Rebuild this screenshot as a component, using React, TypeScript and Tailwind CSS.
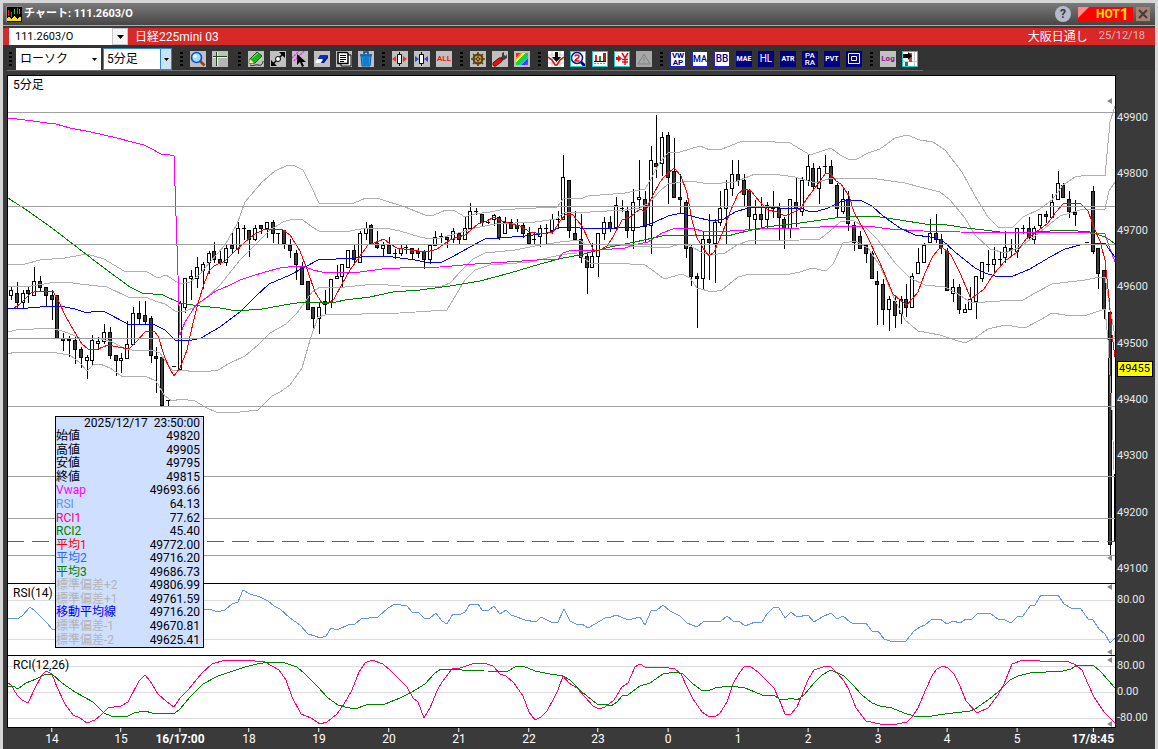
import type { ReactNode } from "react";

// [high, body top, body bottom, low, filled]
type Candle = [number, number, number, number, number] | null;

const candles: Candle[] = [
  [197, 200, 205, 209, 0], [192, 203, 212, 217, 1], [200, 203, 212, 217, 0], [197, 200, 203, 212, 1],
  [177, 191, 205, 205, 0], [186, 191, 197, 200, 1], [197, 197, 205, 215, 1], [200, 205, 209, 229, 1],
  [205, 205, 248, 248, 1], [243, 248, 250, 260, 1], [246, 249, 250, 266, 1], [246, 250, 259, 273, 1],
  [257, 259, 267, 277, 1], [265, 267, 270, 288, 0], [245, 250, 270, 275, 0], [247, 251, 253, 259, 0],
  [234, 242, 251, 253, 0], [237, 242, 265, 268, 1], [265, 265, 270, 285, 1], [263, 268, 270, 282, 0],
  [231, 254, 268, 268, 0], [217, 223, 254, 254, 0], [211, 223, 228, 234, 1], [211, 225, 231, 234, 1],
  [226, 228, 265, 272, 1], [257, 266, 268, 302, 1], [267, 267, 315, 315, 1], [310, 310, 310, 316, 1],
  [276, 276, 276, 276, 1], [211, 213, 279, 279, 0], [188, 188, 217, 222, 0], [180, 186, 188, 209, 0],
  [167, 177, 188, 197, 0], [172, 174, 180, 198, 0], [161, 163, 172, 183, 0], [152, 161, 169, 172, 1],
  [161, 169, 172, 174, 1], [155, 158, 172, 175, 0], [141, 155, 158, 163, 1], [132, 138, 158, 163, 0],
  [135, 138, 138, 149, 0], [140, 140, 149, 166, 1], [135, 138, 149, 150, 0], [135, 135, 138, 143, 1],
  [132, 132, 138, 147, 0], [130, 132, 143, 152, 1], [143, 143, 143, 154, 1], [140, 140, 153, 158, 1],
  [149, 155, 160, 167, 1], [160, 163, 174, 189, 1], [172, 177, 194, 194, 1], [191, 191, 219, 219, 1],
  [217, 217, 228, 237, 1], [213, 217, 228, 243, 0], [200, 211, 214, 223, 1], [189, 189, 211, 217, 0],
  [175, 186, 188, 188, 0], [174, 174, 186, 197, 0], [160, 160, 177, 177, 0], [155, 160, 169, 174, 1],
  [141, 143, 172, 172, 0], [132, 138, 143, 149, 0], [134, 135, 153, 153, 1], [141, 153, 157, 158, 1],
  [152, 155, 158, 166, 0], [147, 155, 163, 163, 1], [159, 163, 163, 168, 1], [155, 158, 163, 165, 0],
  [155, 157, 157, 163, 1], [158, 158, 163, 168, 1], [158, 161, 163, 167, 1], [160, 161, 169, 178, 1],
  [155, 155, 169, 173, 0], [141, 147, 155, 155, 0], [143, 146, 146, 152, 1], [146, 147, 149, 157, 1],
  [138, 141, 149, 152, 0], [143, 143, 149, 153, 1], [127, 138, 149, 149, 0], [113, 121, 138, 138, 0],
  [118, 121, 121, 124, 1], [124, 124, 132, 135, 1], [129, 132, 132, 133, 1], [124, 125, 129, 135, 0],
  [126, 127, 147, 149, 1], [127, 132, 143, 143, 0], [129, 132, 138, 138, 1], [129, 135, 138, 141, 1],
  [132, 135, 143, 147, 1], [137, 143, 153, 153, 1], [143, 149, 149, 154, 1], [135, 138, 146, 156, 0],
  [134, 138, 138, 153, 1], [124, 129, 140, 143, 0], [121, 129, 129, 138, 1], [65, 87, 129, 129, 0],
  [90, 90, 140, 147, 1], [121, 143, 149, 150, 1], [124, 149, 167, 172, 1], [163, 166, 177, 203, 1],
  [153, 166, 177, 177, 0], [143, 143, 166, 186, 0], [127, 132, 143, 149, 0], [126, 132, 138, 141, 1],
  [107, 115, 138, 138, 0], [110, 118, 118, 121, 1], [117, 121, 140, 147, 1], [99, 112, 140, 158, 0],
  [70, 107, 109, 118, 0], [101, 109, 136, 151, 1], [56, 70, 135, 163, 0], [25, 73, 76, 87, 1],
  [42, 47, 73, 85, 0], [42, 45, 87, 113, 1], [48, 81, 107, 107, 1], [84, 107, 109, 123, 1],
  [110, 112, 158, 167, 1], [155, 157, 186, 195, 1], [183, 186, 188, 237, 1], [142, 149, 188, 198, 0],
  [124, 149, 152, 189, 1], [129, 132, 153, 192, 0], [101, 118, 132, 135, 0], [90, 99, 118, 154, 0],
  [70, 84, 98, 105, 0], [70, 84, 90, 95, 1], [84, 90, 104, 116, 1], [99, 101, 126, 138, 1],
  [110, 124, 129, 154, 0], [107, 124, 129, 136, 1], [112, 115, 129, 138, 0], [101, 118, 118, 127, 1],
  [113, 118, 127, 150, 1], [127, 129, 138, 158, 1], [109, 109, 138, 147, 0], [87, 112, 118, 136, 1],
  [87, 90, 121, 125, 0], [64, 76, 90, 95, 0], [73, 78, 96, 99, 1], [76, 78, 98, 113, 0],
  [65, 76, 76, 83, 1], [70, 76, 93, 93, 1], [93, 95, 118, 127, 1], [98, 109, 121, 123, 0],
  [101, 109, 133, 140, 1], [132, 135, 152, 160, 1], [141, 146, 158, 158, 1], [154, 155, 163, 172, 1],
  [161, 163, 188, 188, 1], [181, 191, 194, 234, 1], [189, 194, 219, 234, 1], [206, 209, 219, 240, 0],
  [206, 211, 225, 237, 1], [206, 209, 223, 233, 0], [194, 209, 217, 226, 1], [183, 186, 217, 217, 0],
  [158, 172, 183, 183, 0], [153, 155, 172, 172, 0], [129, 143, 152, 152, 0], [124, 143, 149, 152, 1],
  [144, 149, 157, 163, 1], [158, 161, 200, 200, 1], [189, 197, 203, 211, 0], [194, 197, 219, 223, 1],
  [214, 219, 222, 222, 0], [197, 209, 219, 219, 0], [186, 186, 211, 228, 0], [172, 172, 188, 191, 0],
  [160, 174, 174, 181, 1], [157, 169, 174, 183, 0], [161, 169, 169, 175, 1], [141, 157, 167, 172, 0],
  [149, 158, 160, 166, 1], [138, 138, 161, 167, 0], [135, 138, 138, 143, 1], [127, 138, 147, 150, 1],
  [136, 138, 149, 153, 0], [124, 124, 135, 137, 0], [121, 124, 126, 132, 1], [104, 112, 127, 127, 0],
  [81, 93, 109, 109, 0], [93, 95, 107, 107, 1], [101, 109, 121, 127, 1], [110, 122, 124, 135, 1],
  null, [152, 152, 152, 152, 1], [96, 101, 161, 163, 1], [158, 158, 183, 198, 1],
  [180, 180, 219, 228, 1], [222, 222, 454, 465, 1], [384, 384, 451, 451, 0],
];

const candleX = (i: number) => Math.floor(180.1 + (i - 29) * 5.815) + 0.5;

const bands = [
  "8,174 25,174 40,170 65,168 87,164 104,169 124,181 147,182 158,188 166,185 180,194 190,192 200,184 210,172 225,155 237,134 245,112 262,92 275,81 286,76 293,75 303,80 312,98 319,113 354,113 366,108 380,109 405,117 425,125 434,125 446,120 455,121 465,127 475,124 490,122 500,120 515,119 557,117 564,108 580,109 588,106 625,103 645,99 652,87 660,72 668,63 680,62 700,56 710,60 722,59 740,52 760,51 790,53 800,59 810,65 822,61 831,58 840,65 848,69 857,69 868,63 880,59 895,48 907,45 920,50 933,52 945,60 962,82 975,106 988,127 998,137 1013,137 1023,127 1040,119 1052,110 1063,95 1075,87 1088,85 1105,86 1110,32 1115,16",
  "8,196 25,197 50,193 65,192 80,194 107,197 128,207 145,207 158,212 165,214 175,221 183,222 193,218 205,209 220,195 240,170 258,152 270,140 283,132 293,129 303,130 312,137 319,141 350,141 366,138 385,138 400,141 420,147 430,149 440,148 455,144 475,138 495,134 535,132 556,129 564,123 590,122 625,120 640,118 650,112 660,101 668,94 690,91 710,94 735,92 755,84 780,85 795,87 815,93 832,88 860,89 870,88 905,93 920,97 940,102 950,110 965,128 975,145 990,159 1005,163 1020,157 1035,146 1050,134 1060,126 1080,120 1105,119 1109,101 1115,92",
  "8,242 16,240 52,238 68,243 82,249 98,248 112,252 124,258 132,260 152,260 160,263 166,272 172,280 205,282 218,280 230,273 245,266 258,255 270,243 286,234 297,223 305,212 312,202 320,197 345,197 375,194 400,196 440,197 450,193 462,180 473,169 485,163 515,160 535,156 560,152 580,150 585,154 630,156 650,157 670,157 680,154 690,156 703,163 712,165 725,163 737,155 748,151 800,150 820,149 830,141 840,132 852,130 865,137 878,150 895,173 910,188 925,195 945,197 958,204 970,212 985,212 1000,211 1023,210 1035,203 1052,194 1085,190 1100,187 1105,187 1109,212 1113,235 1115,247",
  "8,264 15,262 50,262 70,265 80,273 87,281 93,275 100,274 110,278 123,287 145,286 156,291 165,306 172,311 181,309 195,311 205,317 218,323 240,322 258,320 272,306 280,302 290,295 302,278 310,250 318,227 325,225 400,223 447,220 456,205 465,190 475,180 490,175 530,172 560,165 575,163 585,169 590,173 630,174 645,175 655,182 664,189 682,184 690,188 697,198 712,202 722,200 738,187 750,184 790,184 800,182 812,178 826,181 833,174 843,153 855,151 868,158 880,176 895,210 905,230 918,241 940,245 955,250 965,253 975,248 988,239 1005,235 1025,238 1040,230 1052,223 1065,225 1087,225 1105,219 1108,250 1112,320 1114,380",
];

const vwap =
  "8,28 25,30 40,32 47,33 56,34 70,38 91,42 117,48 132,52 144,55 150,58 161,64 170,65 174,66 180,245 185,232 196,215 206,208 216,201 228,196 240,190 252,186 265,182 280,178 296,176 306,177 313,180 322,182 332,183 360,182 382,179 400,178 440,177 475,174 507,172 537,170 558,169 563,163 569,161 580,160 600,160 625,158 633,155 648,152 662,143 676,138 695,139 702,141 730,141 760,139 800,138 840,136 867,136 890,139 923,141 960,142 1000,143 1030,142 1060,142 1090,143 1105,144 1109,156 1115,172";
const average3 =
  "8,108 28,121 52,138 78,158 104,178 130,197 142,203 163,205 180,213 200,216 220,218 237,221 262,219 290,214 305,212 336,212 345,210 370,207 393,202 420,200 450,196 480,191 510,183 540,174 563,168 580,165 610,157 635,152 662,146 685,145 728,146 735,144 765,137 800,133 835,128 860,126 880,127 900,130 925,134 940,134 967,138 1000,142 1020,143 1065,140 1090,142 1105,147 1110,150 1115,154";
const average2 =
  "8,219 28,218 52,216 65,217 75,219 87,223 95,221 105,222 128,234 155,235 165,240 175,250 188,251 201,248 220,237 240,222 256,206 269,194 290,185 305,177 318,170 355,168 368,166 385,166 400,168 415,170 430,173 442,172 452,167 470,157 485,149 500,148 525,146 548,143 558,138 570,137 590,139 640,137 655,132 668,126 681,123 695,127 712,131 724,129 735,122 748,118 760,117 780,118 800,118 808,121 818,121 828,118 840,112 848,110 862,111 872,116 883,126 900,138 915,145 930,147 942,150 955,162 975,178 985,183 995,186 1013,186 1030,179 1050,167 1065,159 1080,155 1105,153 1108,158 1115,167";
const average1 =
  "14,218 20,214 31,203 37,201 53,201 58,210 66,227 74,241 82,254 88,259 98,259 108,255 118,257 129,259 136,252 146,241 154,241 158,246 165,268 170,279 174,286 180,278 187,260 193,233 198,213 204,194 209,181 214,176 225,171 233,163 245,152 255,144 263,140 272,139 283,140 290,145 300,161 308,182 315,202 322,213 328,214 334,209 342,194 350,180 360,166 368,155 374,153 384,149 390,154 397,158 410,160 427,162 437,159 450,150 458,147 465,145 478,134 487,131 494,127 502,131 512,134 520,136 530,142 542,144 553,142 560,131 566,124 573,125 582,136 589,151 594,161 600,160 607,156 613,147 622,130 630,127 640,119 645,122 652,107 660,92 664,87 674,78 681,86 687,103 692,130 697,148 703,158 709,166 714,162 722,144 730,122 738,104 744,99 751,101 760,112 768,120 777,122 785,126 792,123 800,119 808,107 818,94 825,84 830,83 836,91 841,94 849,106 854,122 865,142 880,173 893,204 900,210 907,215 918,202 925,183 933,166 938,160 942,157 951,165 960,183 971,209 984,199 993,185 1005,171 1016,163 1026,149 1035,143 1048,133 1056,122 1064,113 1080,113 1088,121 1095,140 1100,151 1105,170 1109,208 1112,245 1115,267";
const rsi =
  "8,618 17,619 22,616 30,607 35,611 42,618 47,623 52,629 80,634 120,622 160,628 203,609 210,609 217,612 225,610 232,604 238,602 243,590 250,594 260,597 268,601 274,606 280,609 290,618 300,625 308,634 315,636 320,638 326,636 331,628 337,630 348,625 355,624 361,619 378,617 388,608 395,604 407,606 412,612 418,612 424,618 430,618 436,613 442,621 447,624 453,614 459,615 465,612 470,604 478,604 482,610 489,610 494,606 500,614 506,610 511,615 525,620 536,622 541,617 551,622 558,622 564,609 570,621 576,624 582,624 588,628 595,624 605,618 611,617 616,615 628,620 640,617 645,625 651,611 657,610 663,605 670,611 680,616 687,623 697,627 703,622 710,621 721,621 727,616 733,621 739,621 745,626 755,622 762,622 767,614 774,607 779,608 785,618 791,612 797,617 808,615 814,622 822,617 831,613 837,619 843,616 850,622 854,624 866,623 872,631 878,631 884,639 890,641 906,641 914,631 920,627 925,625 931,620 940,619 947,624 953,621 960,623 966,619 972,619 978,613 990,613 998,619 1005,620 1011,623 1018,616 1023,616 1030,606 1035,605 1041,595 1058,595 1064,604 1071,608 1081,609 1088,619 1093,620 1099,629 1105,634 1110,643 1115,638";
const rci1 =
  "8,683 11,685 17,695 22,700 28,703 35,688 42,675 46,671 52,674 57,687 65,704 73,715 80,718 87,723 95,720 101,715 108,708 121,706 128,702 139,681 145,675 150,681 158,694 167,702 174,707 180,698 188,690 202,673 212,664 225,660 245,660 265,662 272,666 279,670 286,680 292,697 301,714 311,718 320,724 327,722 337,714 344,704 352,690 359,672 365,663 372,660 383,664 391,671 399,679 407,687 413,698 418,702 424,718 430,708 437,691 442,682 452,669 460,668 475,663 487,664 493,666 500,674 506,676 514,683 523,696 529,712 535,720 541,717 547,711 553,700 558,690 563,676 569,683 577,688 585,697 593,706 599,709 605,707 614,700 622,687 628,683 635,667 640,664 645,667 662,667 675,669 681,674 687,687 693,699 702,712 708,716 715,717 720,713 727,702 733,684 738,675 744,667 750,666 758,672 766,680 774,688 779,699 785,714 791,714 797,707 808,680 814,670 826,666 831,667 838,674 844,681 849,690 856,708 866,721 880,724 897,724 907,722 912,717 918,708 926,689 933,674 937,669 943,666 948,668 954,674 960,686 966,701 977,713 988,708 998,695 1004,684 1012,664 1023,660 1040,661 1066,661 1074,664 1082,670 1088,684 1094,697 1104,712 1115,723";
const rci2 = [
  "8,687 13,686 18,689 26,683 36,679 46,674 52,674 62,683 75,692 93,702 104,713 111,716 128,716 134,713 145,711 152,713 175,713 180,709 190,697 203,684 218,676 230,672 245,667 257,664 270,662 285,663 297,667 305,674 318,687 328,698 338,705 345,707 355,709 366,705 385,704 400,698 412,692 425,684 435,673 441,669 455,669 462,670 484,670",
  "488,671 503,672 508,671 515,667 523,666 535,671 550,674 563,676 570,680 582,692 597,704 606,704 611,706 617,702 622,696 628,695 640,686 650,683 663,674 675,672 683,674 692,683 701,690 708,691 715,688 730,686 745,688 755,692 762,695 774,695 779,699 785,700 791,698 797,700 804,695 814,683 822,675 831,670 844,676 852,684 862,695 872,703 880,706 892,708 904,713 914,716 932,716 945,714 970,711 975,709 988,700 998,692 1010,680 1018,676 1030,673 1063,671 1071,669 1077,665 1093,665 1101,672 1108,680 1115,688",
];

const levels = [22, 116, 154, 248, 316, 386, 428, 465];

const ticks = [
  { x: 52, label: "14" },
  { x: 121, label: "15" },
  { x: 180, label: "16/17:00", bold: true },
  { x: 249, label: "18" },
  { x: 319, label: "19" },
  { x: 389, label: "20" },
  { x: 459, label: "21" },
  { x: 529, label: "22" },
  { x: 598, label: "23" },
  { x: 668, label: "0" },
  { x: 738, label: "1" },
  { x: 808, label: "2" },
  { x: 878, label: "3" },
  { x: 947, label: "4" },
  { x: 1017, label: "5" },
  { x: 1093, label: "17/8:45", bold: true },
];

const readings = [
  { name: "始値", value: "49820", color: "text-black" },
  { name: "高値", value: "49905", color: "text-black" },
  { name: "安値", value: "49795", color: "text-black" },
  { name: "終値", value: "49815", color: "text-black" },
  { name: "Vwap", value: "49693.66", color: "text-[#ff00ff]" },
  { name: "RSI", value: "64.13", color: "text-[#6495ed]" },
  { name: "RCI1", value: "77.62", color: "text-[#ff0080]" },
  { name: "RCI2", value: "45.40", color: "text-[#008000]" },
  { name: "平均1", value: "49772.00", color: "text-[#ff0000]" },
  { name: "平均2", value: "49716.20", color: "text-[#1e6eff]" },
  { name: "平均3", value: "49686.73", color: "text-[#008000]" },
  { name: "標準偏差+2", value: "49806.99", color: "text-[#b4b4b4]" },
  { name: "標準偏差+1", value: "49761.59", color: "text-[#b4b4b4]" },
  { name: "移動平均線", value: "49716.20", color: "text-[#0000ff]" },
  { name: "標準偏差-1", value: "49670.81", color: "text-[#b4b4b4]" },
  { name: "標準偏差-2", value: "49625.41", color: "text-[#b4b4b4]" },
];

function Line({ points, color }: { points: string; color: string }) {
  return <polyline points={points} fill="none" stroke={color} strokeWidth="1" shapeRendering="crispEdges" />;
}

function Marker({ y }: { y: number }) {
  return <path d={`M1107 ${y} L1112 ${y - 3} V${y + 3} Z`} fill="#8a8a8a" />;
}

function PriceChart() {
  return (
    <svg className="block size-full" viewBox="8 -14 1107 507" preserveAspectRatio="none" role="img" aria-label="ローソク足チャート">
      <g shapeRendering="crispEdges" stroke="#000" strokeWidth="1">
        {candles.map((c, i) => {
          if (!c) return null;
          const [high, top, bottom, low, filled] = c;
          const x = candleX(i);
          return (
            <g key={i}>
              <line x1={x} x2={x} y1={high} y2={low + 1} />
              {top === bottom ? (
                <line x1={x - 2.5} x2={x + 1.5} y1={top + 0.5} y2={top + 0.5} />
              ) : (
                <rect x={x - 2} y={top + 0.5} width="3" height={bottom - top} fill={filled ? "#3c3c3c" : "#fff"} />
              )}
            </g>
          );
        })}
      </g>
      {bands.map((points, i) => (
        <Line key={i} points={points} color="#b0b0b0" />
      ))}
      <Line points={average3} color="#008000" />
      <Line points={vwap} color="#ff00ff" />
      <Line points={average2} color="#0000ff" />
      <Line points={average1} color="#ff0000" />
      {levels.map((y) => (
        <line key={y} x1="8" x2="1115" y1={y + 0.5} y2={y + 0.5} stroke="#a0a0a0" />
      ))}
      <line x1="7" x2="1115" y1="451.5" y2="451.5" stroke="#188080" strokeDasharray="17 8" />
      <Marker y={11} />
      <Marker y={468} />
    </svg>
  );
}

function RsiChart() {
  return (
    <svg className="block size-full" viewBox="8 584 1107 71" preserveAspectRatio="none" role="img" aria-label="RSI">
      <line x1="8" x2="1115" y1="600.5" y2="600.5" stroke="#dcdcdc" />
      <line x1="8" x2="1115" y1="639.5" y2="639.5" stroke="#dcdcdc" />
      <Line points={rsi} color="#6495ed" />
      <Marker y={587} />
      <Marker y={652} />
    </svg>
  );
}

function RciChart() {
  return (
    <svg className="block size-full" viewBox="8 656 1107 71" preserveAspectRatio="none" role="img" aria-label="RCI">
      {[666, 692, 718].map((y) => (
        <line key={y} x1="8" x2="1115" y1={y + 0.5} y2={y + 0.5} stroke="#dcdcdc" />
      ))}
      <Line points={rci1} color="#ff0080" />
      {rci2.map((points, i) => (
        <Line key={i} points={points} color="#008000" />
      ))}
      <Marker y={660} />
      <Marker y={724} />
    </svg>
  );
}

function DataBox() {
  return (
    <table className="absolute left-12 top-[341px] h-[232px] w-[149px] border border-black bg-[#cfdfff] text-xs leading-[13px] text-black">
      <thead>
        <tr>
          <th colSpan={2} className="p-0 pr-[3px] text-right font-normal">
            2025/12/17&nbsp; 23:50:00
          </th>
        </tr>
      </thead>
      <tbody>
        {readings.map((r) => (
          <tr key={r.name}>
            <th scope="row" className={`p-0 text-left font-normal whitespace-nowrap ${r.color}`}>
              {r.name}
            </th>
            <td className="p-0 pr-[3px] text-right">{r.value}</td>
          </tr>
        ))}
      </tbody>
    </table>
  );
}

function Dots() {
  return (
    <span className="flex flex-col gap-[2px]">
      <span className="h-[2px] w-[3px] bg-black" />
      <span className="h-[2px] w-[3px] bg-black" />
      <span className="h-[2px] w-[3px] bg-black" />
      <span className="h-[2px] w-[3px] bg-black" />
    </span>
  );
}

function Grip() {
  return (
    <span className="flex w-[18px] shrink-0 justify-center pl-px">
      <Dots />
    </span>
  );
}

function Tool({ label, tone = "bg-[#c0c0c0]", children }: { label: string; tone?: string; children: ReactNode }) {
  return (
    <button
      type="button"
      aria-label={label}
      className={`flex size-4 shrink-0 items-center justify-center overflow-hidden ${tone}`}
    >
      {children}
    </button>
  );
}

function Pic({ children }: { children: ReactNode }) {
  return (
    <svg className="size-4 shrink-0" viewBox="0 0 16 16" fill="none">
      {children}
    </svg>
  );
}

const lightTag = "border border-[#2020e0] bg-white text-[#000080]";
const darkTag = "bg-[#000080] text-white";
const cyanTag = "border border-[#20c8c8] bg-white";

function Toolbar() {
  return (
    <div className="flex h-[25px] shrink-0 items-center bg-[#333333] pt-[3px] pl-[4px]">
      <span className="w-[9px] pl-[2px]">
        <Dots />
      </span>
      <div className="relative">
        <select aria-label="チャート種類" className="block h-[22px] w-[85px] appearance-none bg-white pl-1 text-xs text-black">
          <option>ローソク</option>
        </select>
        <svg className="pointer-events-none absolute right-1 top-[10px] h-[3px] w-[5px]" viewBox="0 0 5 3">
          <path d="M0 0h5L2.500 3z" fill="#000" />
        </svg>
      </div>
      <div className="relative ml-[2px]">
        <select aria-label="足種" className="block h-[22px] w-[69px] appearance-none border border-[#2f86d8] bg-white pl-[3px] text-xs text-black">
          <option>5分足</option>
        </select>
        <span className="pointer-events-none absolute right-0 top-0 flex h-[22px] w-3 items-center justify-center border border-[#2f86d8] bg-[#cce4f7]">
          <svg className="h-[3px] w-[5px]" viewBox="0 0 5 3">
            <path d="M0 0h5L2.500 3z" fill="#000" />
          </svg>
        </span>
      </div>

      <Grip />
      <div className="flex gap-[6px]">
        <Tool label="拡大">
          <Pic>
            <path d="M10 10l4.500 4.500" stroke="#8a4a10" strokeWidth="2.600" />
            <circle cx="6.500" cy="6.500" r="5" fill="#a8dcff" stroke="#0a4ed0" strokeWidth="1.600" />
            <circle cx="5" cy="5" r="1.800" fill="#f0faff" />
          </Pic>
        </Tool>
        <Tool label="十字線">
          <Pic>
            <path d="M5.500 1v14M1 6.500h14" stroke="#e8f4e8" />
            <path d="M4.500 1v14M1 5.500h14" stroke="#1c4a1c" />
            <path d="M7 7h9v9H7z" fill="#b4b4b4" />
          </Pic>
        </Tool>
      </div>
      <span className="w-[2px]" />

      <Grip />
      <div className="flex gap-[6px]">
        <Tool label="描画">
          <Pic>
            <path d="M2 14c3 2 5-1 8 0s5-1 5-4" stroke="#303030" />
            <path d="M1 12l1-4 7-7 5 4-7 7z" fill="#18b818" stroke="#086008" />
            <path d="M1 12l1-4 4 4z" fill="#ffe8a0" />
            <path d="M4 7l6-5" stroke="#80f080" />
          </Pic>
        </Tool>
        <Tool label="線移動">
          <Pic>
            <path d="M3 13L13 3" stroke="#000" strokeWidth="1.500" />
            <path d="M9 1h6v6zM1 9v6h6z" fill="#000" />
            <circle cx="8" cy="8" r="2.500" fill="#fff" stroke="#000" />
          </Pic>
        </Tool>
        <Tool label="選択">
          <Pic>
            <path d="M0 7L7 0M2 10L12 0" stroke="#ff20ff" strokeWidth="1.500" strokeDasharray="2 1" />
            <path d="M5 3v11l3-3 2 5 2-1-2-4h4z" fill="#000" />
          </Pic>
        </Tool>
        <Tool label="消しゴム">
          <Pic>
            <path d="M6 4h8l-4 5H3z" fill="#0830c8" />
            <path d="M3 8h6l-3 4H1z" fill="#fff" />
            <path d="M9 9l-2 3h3l4-5V4z" fill="#0018a0" />
          </Pic>
        </Tool>
        <Tool label="一覧">
          <Pic>
            <path d="M5 4h10v11H5z" fill="#fff" stroke="#000" />
            <path d="M2 1.500h9l1 1v10H2z" fill="#fff" stroke="#000" strokeWidth="1.500" />
            <path d="M4 4.500h6M4 6.500h6M4 8.500h6M4 10.500h4" stroke="#000" />
          </Pic>
        </Tool>
        <Tool label="削除">
          <Pic>
            <path d="M2 4h12M6 3V1h4v2" stroke="#004c90" strokeWidth="1.500" />
            <path d="M3 5h10l-1 10H4z" fill="#1e9cf0" stroke="#0060b0" />
            <path d="M6 6v8M8 6v8M10 6v8" stroke="#0060b0" />
          </Pic>
        </Tool>
      </div>

      <Grip />
      <div className="flex gap-[6px]">
        <Tool label="広げる">
          <Pic>
            <path d="M7.500 1v14" stroke="#000" />
            <path d="M5.500 3.500h4v9h-4z" fill="#fff" stroke="#000" />
            <path d="M0 8l4-3v6zM15 8l-4-3v6z" fill="#f03030" />
          </Pic>
        </Tool>
        <Tool label="狭める">
          <Pic>
            <path d="M7.500 1v14" stroke="#000" />
            <path d="M5.500 3.500h4v9h-4z" fill="#fff" stroke="#000" />
            <path d="M5 8L1 5v6zM10 8l4-3v6z" fill="#2848e0" />
          </Pic>
        </Tool>
        <Tool label="全表示" tone="bg-[#c0c0c0] text-[#f01818]">
          <span className="text-[8px] leading-4 font-bold">ALL</span>
        </Tool>
      </div>

      <Grip />
      <div className="flex gap-[6px]">
        <Tool label="設定">
          <Pic>
            <path d="M8 1v14M1 8h14M3 3l10 10M13 3L3 13" stroke="#5a3c08" strokeWidth="1.500" />
            <circle cx="8" cy="8" r="4.500" fill="#c0a060" stroke="#5a3c08" strokeWidth="2" />
            <path d="M8 4v8M4 8h8" stroke="#5a3c08" />
            <circle cx="8" cy="8" r="1.500" fill="#e0b040" stroke="#503000" />
          </Pic>
        </Tool>
        <Tool label="ツール">
          <Pic>
            <path d="M8 8l2-3V2l2-1v3l2 1 1-2v4l-3 2-3 1z" fill="#404040" />
            <path d="M3 13l5-4" stroke="#700000" strokeWidth="5" strokeLinecap="round" />
            <path d="M3 13l5-4" stroke="#e81010" strokeWidth="3.500" strokeLinecap="round" />
          </Pic>
        </Tool>
        <Tool label="配色">
          <Pic>
            <g shapeRendering="crispEdges">
              <path d="M2 2h12v12H2z" fill="#20d040" />
              <path d="M2 2h4L2 6z" fill="#ff2020" />
              <path d="M6 2h2L2 8V6z" fill="#ff9000" />
              <path d="M8 2h4L2 11V8z" fill="#ffff00" />
              <path d="M14 5v4l-7 5H4z" fill="#00c8ff" />
              <path d="M14 8v3l-4 3H7z" fill="#2040ff" />
              <path d="M14 11v3h-4z" fill="#c020ff" />
            </g>
          </Pic>
        </Tool>
      </div>

      <Grip />
      <div className="flex gap-[6px]">
        <Tool label="下落通知" tone="bg-white">
          <Pic>
            <path d="M0 4h16M0 8h16M0 12h16M4 0v16M12 0v16" stroke="#c8c8c8" />
            <path d="M0 6l4 3 3 5h2l3-5 4-3" stroke="#d01010" strokeWidth="1.500" />
            <path d="M7 1h3v5h3l-4.500 5L4 6h3z" fill="#000" />
          </Pic>
        </Tool>
        <Tool label="検索2" tone={cyanTag}>
          <Pic>
            <path d="M11 11l4 4" stroke="#000080" strokeWidth="3" />
            <circle cx="7" cy="7" r="5.500" fill="#fff" stroke="#0a1890" strokeWidth="1.500" />
            <path d="M5 5.500c0-2 4-2 4 0S5 8 5 10h4.500" stroke="#e01010" strokeWidth="1.500" />
          </Pic>
        </Tool>
        <Tool label="出来高" tone={cyanTag}>
          <Pic>
            <path d="M2 12.500h12" stroke="#909090" strokeDasharray="2 1" />
            <path d="M2 10.500h12" stroke="#000" />
            <path d="M3 4h2v6H3z" fill="#e02020" />
            <path d="M7 5h2v5H7z" fill="#189030" />
            <path d="M11 2h3v8h-3z" fill="#c01818" />
          </Pic>
        </Tool>
        <Tool label="円注文" tone={cyanTag}>
          <Pic>
            <path d="M2 7.500h3" stroke="#e01010" strokeWidth="3" />
            <path d="M4 4l4 3.500L4 11z" fill="#e01010" />
            <path d="M8 2l3 5 3-5M11 7v7M8 8.500h6M8 11h6" stroke="#e01010" strokeWidth="1.500" />
          </Pic>
        </Tool>
        <Tool label="警告" tone="bg-[#a8a8a8]">
          <Pic>
            <path d="M8 3l6 10H2z" stroke="#808080" />
            <path d="M8 6v4M8 11v1" stroke="#808080" />
          </Pic>
        </Tool>
      </div>

      <Grip />
      <div className="flex gap-[6px]">
        <Tool label="VWAP" tone={lightTag}>
          <span className="text-[8px] leading-[7px] font-bold">
            VW
            <br />
            AP
          </span>
        </Tool>
        <Tool label="MA" tone={lightTag}>
          <span className="text-[9px] leading-3 font-medium">MA</span>
        </Tool>
        <Tool label="BB" tone={lightTag}>
          <span className="text-[10px] leading-3 font-medium">BB</span>
        </Tool>
        <Tool label="MAE" tone={darkTag}>
          <span className="text-[7px] leading-3 font-bold">MAE</span>
        </Tool>
        <Tool label="HL" tone={darkTag}>
          <span className="text-[10px] leading-3">HL</span>
        </Tool>
        <Tool label="ATR" tone={darkTag}>
          <span className="text-[7px] leading-3 font-bold">ATR</span>
        </Tool>
        <Tool label="パラボリック" tone={darkTag}>
          <span className="text-[8px] leading-[7px] font-medium">
            PA
            <br />
            RA
          </span>
        </Tool>
        <Tool label="PVT" tone={darkTag}>
          <span className="text-[7px] leading-3 font-bold">PVT</span>
        </Tool>
        <Tool label="枠" tone={darkTag}>
          <Pic>
            <path d="M2.500 2.500h11v10h-11zM5.500 5.500h5v4h-5z" stroke="#fff" />
          </Pic>
        </Tool>
      </div>

      <Grip />
      <div className="flex gap-[6px]">
        <Tool label="ログ目盛" tone="bg-[#c0c0c0] text-[#90108c]">
          <span className="text-[8px] leading-4 font-bold">Log</span>
        </Tool>
        <Tool label="注文パネル" tone={cyanTag}>
          <Pic>
            <path d="M1 10.500h14M12.500 1v14" stroke="#c8c8c8" />
            <path d="M3 11h3v4H3z" fill="#109030" />
            <path d="M7 2h3v9H7z" fill="#f03030" />
            <path d="M1 3h5V1l4 4-4 4V7H1z" fill="#000" />
          </Pic>
        </Tool>
      </div>
    </div>
  );
}

export default function App() {
  return (
    <div className="flex h-screen min-h-[600px] w-full flex-col border-x-[3px] border-t-[3px] border-[#d6d6d6] bg-[#3a3a3a] font-[Roboto,'Noto_Sans_CJK_JP',sans-serif]">
      <header className="flex h-[22px] shrink-0 items-center bg-linear-to-b from-[#7a7a7a] to-[#474747] pl-[3px] pr-[5px]">
        <svg className="size-4" viewBox="0 0 16 16" shapeRendering="crispEdges">
          <path d="M0 0h16v16H0z" fill="#000" stroke="#888" />
          <path d="M1 15v-3l2-1 2 2 3-3 3 3 3-3 1 2v3z" fill="#ffe020" />
          <path d="M2.500 4v6M5.500 6v5M11.500 2v6" stroke="#f02020" />
          <path d="M8.500 3v5M13.500 3v5" stroke="#20c040" />
        </svg>
        <h1 className="ml-[2px] text-[11px] font-bold text-white">チャート: 111.2603/O</h1>
        <button
          type="button"
          aria-label="ヘルプ"
          className="ml-auto flex size-4 items-center justify-center rounded-full bg-[#b4bccb] text-xs font-bold text-[#303848]"
        >
          ?
        </button>
        <button type="button" className="ml-[7px] flex h-[15px] w-[55px] items-center justify-end bg-[#ff0000] pr-1 text-[#ffe000]">
          <svg className="mr-auto size-[11px] self-start" viewBox="0 0 11 11">
            <path d="M0 0h11L0 11z" fill="#ff8a8a" />
          </svg>
          <span className="text-xs leading-[15px] font-bold">HOT</span>
          <span className="text-base leading-[15px] font-bold">1</span>
        </button>
        <button type="button" aria-label="閉じる" className="ml-[3px] flex size-[14px] items-center justify-center bg-[#a8826e]">
          <svg className="size-[10px]" viewBox="0 0 10 10">
            <path d="M1 1l8 8M9 1L1 9" stroke="#403c3c" strokeWidth="2" />
          </svg>
        </button>
      </header>

      <div className="shrink-0 border-t border-[#f0a020] pt-[2px]">
        <div className="flex h-[17px] items-center bg-[#d82828] pl-[6px] pr-[10px] text-xs text-white">
          <input
            aria-label="銘柄コード"
            defaultValue="111.2603/O"
            className="h-[17px] w-[103px] bg-white pl-[6px] text-[11px] text-black outline-none"
          />
          <button
            type="button"
            aria-label="銘柄を選択"
            className="flex h-[17px] w-4 items-center justify-center border border-[#c8c8c8] bg-[#f4f4f4]"
          >
            <svg className="h-1 w-[7px]" viewBox="0 0 7 4">
              <path d="M0 0h7L3.500 4z" fill="#000" />
            </svg>
          </button>
          <span className="ml-[7px]">日経225mini 03</span>
          <span className="ml-auto">大阪日通し</span>
          <span className="ml-[11px] text-[11px] text-[#e8b8b8]">25/12/18</span>
        </div>
      </div>

      <Toolbar />
      <div className="ml-1 h-px w-[916px] shrink-0 bg-[#6c6c6c]" />

      <main className="relative mt-1 ml-1 flex min-h-0 flex-1 flex-col">
        <section className="flex min-h-0 flex-[508]">
          <div className="relative min-w-0 flex-1 border-x border-t border-black bg-white">
            <PriceChart />
            <span className="absolute left-[5px] top-px text-xs text-black">5分足</span>
          </div>
          <div className="relative flex w-[39px] flex-col justify-between pt-9 pb-[7px] pl-px text-[11px] leading-[14px] text-[#e8e8e8]">
            <span>49900</span>
            <span>49800</span>
            <span>49700</span>
            <span>49600</span>
            <span>49500</span>
            <span>49400</span>
            <span>49300</span>
            <span>49200</span>
            <span>49100</span>
            <span className="absolute left-px top-[286px] w-9 border border-black bg-[#ffff00] pl-px text-black">49455</span>
          </div>
        </section>

        <section className="flex min-h-0 flex-[72]">
          <div className="relative min-w-0 flex-1 border-x border-t border-black bg-white">
            <RsiChart />
            <span className="absolute left-[5px] top-px text-xs text-black">RSI(14)</span>
          </div>
          <div className="flex w-[39px] flex-col justify-between pt-[10px] pb-[9px] pl-px text-[11px] leading-[14px] text-[#e8e8e8]">
            <span>80.00</span>
            <span>20.00</span>
          </div>
        </section>

        <section className="flex min-h-0 flex-[72]">
          <div className="relative min-w-0 flex-1 border-x border-t border-black bg-white">
            <RciChart />
            <span className="absolute left-[5px] top-px text-xs text-black">RCI(12,26)</span>
          </div>
          <div className="flex w-[39px] flex-col justify-between pt-1 pb-[2px] pl-px text-[11px] leading-[14px] text-[#e8e8e8]">
            <span>80.00</span>
            <span>0.00</span>
            <span>-80.00</span>
          </div>
        </section>

        <div className="relative mr-[39px] h-[22px] shrink-0 border-t border-black text-xs leading-[14px] text-white">
          {ticks.map((t) => (
            <span
              key={t.label}
              className="absolute top-0 flex -translate-x-1/2 flex-col items-center"
              style={{ left: `${((t.x - 7) / 1109) * 100}%` }}
            >
              <span className="h-1 w-px bg-white" />
              <span className={t.bold ? "font-bold" : ""}>{t.label}</span>
            </span>
          ))}
        </div>

        <DataBox />
      </main>
    </div>
  );
}
